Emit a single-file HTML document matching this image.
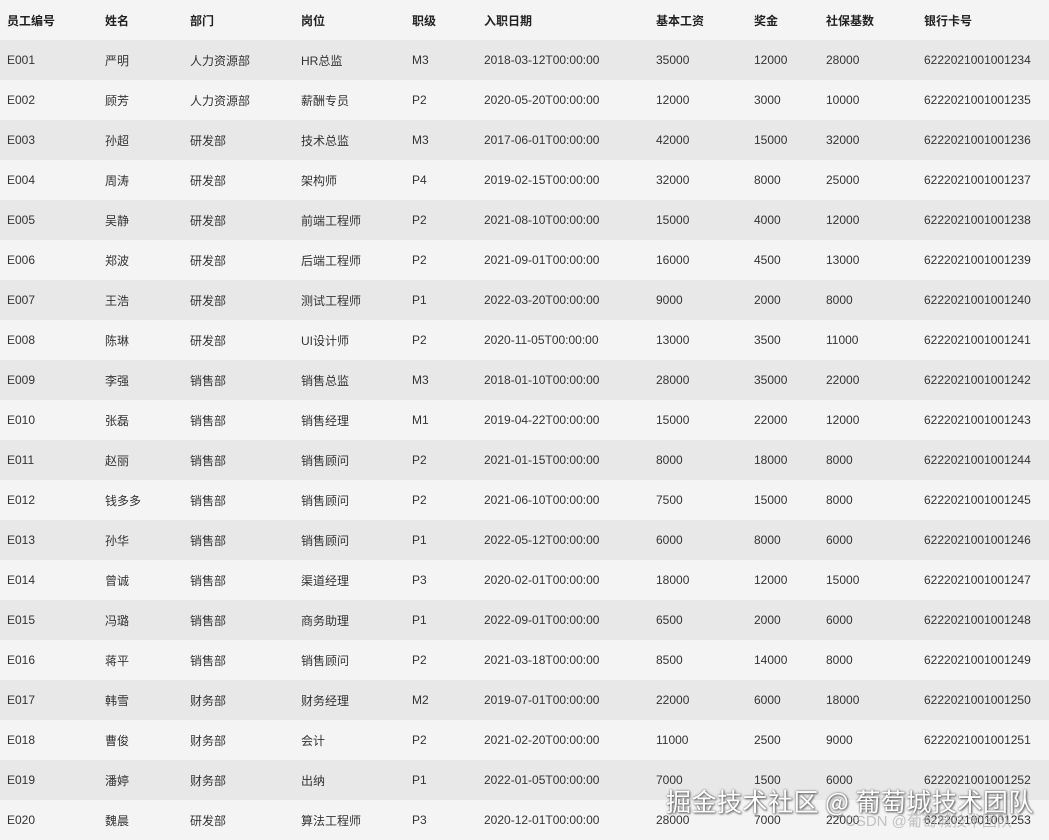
<!DOCTYPE html>
<html><head><meta charset="utf-8"><style>
body{margin:0;width:1049px;height:837px;overflow:hidden;background:#f4f4f4;font-family:"Liberation Sans","Noto Sans CJK SC",sans-serif;font-size:12px;color:#333;position:relative}
table{border-collapse:collapse;position:absolute;left:0;top:0;width:1049px;table-layout:fixed}
td,th{height:40px;padding:0 0 0 7px;text-align:left;white-space:nowrap;vertical-align:middle}
th{font-weight:bold;color:#222}
tbody tr:nth-child(odd){background:#e8e8e8}
tbody tr:nth-child(even){background:#f4f4f4}
.wm{position:absolute;left:666px;top:783px;font-size:25px;color:#fff;text-shadow:0 0 2px #666,1px 1px 2px #555;font-family:"Noto Sans CJK SC",sans-serif;letter-spacing:0.5px}
.wm2{position:absolute;left:845px;top:810px;font-size:15px;color:rgba(180,180,180,0.8);font-family:"Liberation Sans","Noto Sans CJK SC",sans-serif}
</style></head><body>
<table>
<colgroup><col style="width:98px"><col style="width:85px"><col style="width:111px"><col style="width:111px"><col style="width:72px"><col style="width:172px"><col style="width:98px"><col style="width:72px"><col style="width:98px"><col></colgroup>
<thead><tr><th>员工编号</th><th>姓名</th><th>部门</th><th>岗位</th><th>职级</th><th>入职日期</th><th>基本工资</th><th>奖金</th><th>社保基数</th><th>银行卡号</th></tr></thead>
<tbody>
<tr><td>E001</td><td>严明</td><td>人力资源部</td><td>HR总监</td><td>M3</td><td>2018-03-12T00:00:00</td><td>35000</td><td>12000</td><td>28000</td><td>6222021001001234</td></tr>
<tr><td>E002</td><td>顾芳</td><td>人力资源部</td><td>薪酬专员</td><td>P2</td><td>2020-05-20T00:00:00</td><td>12000</td><td>3000</td><td>10000</td><td>6222021001001235</td></tr>
<tr><td>E003</td><td>孙超</td><td>研发部</td><td>技术总监</td><td>M3</td><td>2017-06-01T00:00:00</td><td>42000</td><td>15000</td><td>32000</td><td>6222021001001236</td></tr>
<tr><td>E004</td><td>周涛</td><td>研发部</td><td>架构师</td><td>P4</td><td>2019-02-15T00:00:00</td><td>32000</td><td>8000</td><td>25000</td><td>6222021001001237</td></tr>
<tr><td>E005</td><td>吴静</td><td>研发部</td><td>前端工程师</td><td>P2</td><td>2021-08-10T00:00:00</td><td>15000</td><td>4000</td><td>12000</td><td>6222021001001238</td></tr>
<tr><td>E006</td><td>郑波</td><td>研发部</td><td>后端工程师</td><td>P2</td><td>2021-09-01T00:00:00</td><td>16000</td><td>4500</td><td>13000</td><td>6222021001001239</td></tr>
<tr><td>E007</td><td>王浩</td><td>研发部</td><td>测试工程师</td><td>P1</td><td>2022-03-20T00:00:00</td><td>9000</td><td>2000</td><td>8000</td><td>6222021001001240</td></tr>
<tr><td>E008</td><td>陈琳</td><td>研发部</td><td>UI设计师</td><td>P2</td><td>2020-11-05T00:00:00</td><td>13000</td><td>3500</td><td>11000</td><td>6222021001001241</td></tr>
<tr><td>E009</td><td>李强</td><td>销售部</td><td>销售总监</td><td>M3</td><td>2018-01-10T00:00:00</td><td>28000</td><td>35000</td><td>22000</td><td>6222021001001242</td></tr>
<tr><td>E010</td><td>张磊</td><td>销售部</td><td>销售经理</td><td>M1</td><td>2019-04-22T00:00:00</td><td>15000</td><td>22000</td><td>12000</td><td>6222021001001243</td></tr>
<tr><td>E011</td><td>赵丽</td><td>销售部</td><td>销售顾问</td><td>P2</td><td>2021-01-15T00:00:00</td><td>8000</td><td>18000</td><td>8000</td><td>6222021001001244</td></tr>
<tr><td>E012</td><td>钱多多</td><td>销售部</td><td>销售顾问</td><td>P2</td><td>2021-06-10T00:00:00</td><td>7500</td><td>15000</td><td>8000</td><td>6222021001001245</td></tr>
<tr><td>E013</td><td>孙华</td><td>销售部</td><td>销售顾问</td><td>P1</td><td>2022-05-12T00:00:00</td><td>6000</td><td>8000</td><td>6000</td><td>6222021001001246</td></tr>
<tr><td>E014</td><td>曾诚</td><td>销售部</td><td>渠道经理</td><td>P3</td><td>2020-02-01T00:00:00</td><td>18000</td><td>12000</td><td>15000</td><td>6222021001001247</td></tr>
<tr><td>E015</td><td>冯璐</td><td>销售部</td><td>商务助理</td><td>P1</td><td>2022-09-01T00:00:00</td><td>6500</td><td>2000</td><td>6000</td><td>6222021001001248</td></tr>
<tr><td>E016</td><td>蒋平</td><td>销售部</td><td>销售顾问</td><td>P2</td><td>2021-03-18T00:00:00</td><td>8500</td><td>14000</td><td>8000</td><td>6222021001001249</td></tr>
<tr><td>E017</td><td>韩雪</td><td>财务部</td><td>财务经理</td><td>M2</td><td>2019-07-01T00:00:00</td><td>22000</td><td>6000</td><td>18000</td><td>6222021001001250</td></tr>
<tr><td>E018</td><td>曹俊</td><td>财务部</td><td>会计</td><td>P2</td><td>2021-02-20T00:00:00</td><td>11000</td><td>2500</td><td>9000</td><td>6222021001001251</td></tr>
<tr><td>E019</td><td>潘婷</td><td>财务部</td><td>出纳</td><td>P1</td><td>2022-01-05T00:00:00</td><td>7000</td><td>1500</td><td>6000</td><td>6222021001001252</td></tr>
<tr><td>E020</td><td>魏晨</td><td>研发部</td><td>算法工程师</td><td>P3</td><td>2020-12-01T00:00:00</td><td>28000</td><td>7000</td><td>22000</td><td>6222021001001253</td></tr>
</tbody></table>
<div class="wm2">CSDN @葡萄城技术团队</div>
<div class="wm">掘金技术社区 @ 葡萄城技术团队</div>
</body></html>
